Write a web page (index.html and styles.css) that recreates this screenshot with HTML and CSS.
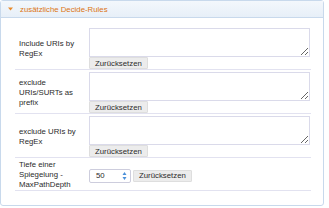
FILE: index.html
```
<!DOCTYPE html>
<html lang="de">

<head>
  <meta charset="UTF-8" />
  <title>Decide-Rules</title>
  <link rel="stylesheet" href="styles.css">
</head>

<body>
  <div class="panel">
    <div class="panel-header">
      <svg class="caret" width="5" height="4" viewBox="0 0 5 4"><path d="M0 0.5 H5 L2.5 3.5 Z" fill="#e8892a"/></svg>
      <span>zusätzliche Decide-Rules</span>
    </div>

    <div class="panel-body">
      <div class="row">
        <div class="label">Include URIs by RegEx</div>
        <div class="field">
          <textarea></textarea>
          <button>Zurücksetzen</button>
        </div>
      </div>

      <div class="row">
        <div class="label">exclude URIs/SURTs as prefix</div>
        <div class="field">
          <textarea></textarea>
          <button>Zurücksetzen</button>
        </div>
      </div>

      <div class="row">
        <div class="label">exclude URIs by RegEx</div>
        <div class="field">
          <textarea></textarea>
          <button>Zurücksetzen</button>
        </div>
      </div>

      <div class="row">
        <div class="label">Tiefe einer Spiegelung - MaxPathDepth</div>
        <div class="field inline">
          <div class="number">
            <span>50</span>
            <svg width="5" height="10" viewBox="0 0 5 10">
              <path d="M0.5 4 L2.5 1 L4.5 4 Z" fill="#4a90d9"/>
              <path d="M0.5 6 L2.5 9 L4.5 6 Z" fill="#4a90d9"/>
            </svg>
          </div>
          <button>Zurücksetzen</button>
        </div>
      </div>
    </div>
  </div>
</body>

</html>
```

FILE: styles.css
```
body {
  margin: 0;
  padding: 0;
  background: #fff;
  font-family: 'Liberation Sans', Arial, sans-serif;
  font-size: 7.8px;
  color: #2b2b2b;
}

.panel {
  width: 324px;
  height: 206px;
  box-sizing: border-box;
  border: 1px solid #c8d9ec;
  border-radius: 3px;
  background: #fff;
}

.panel-header {
  display: flex;
  align-items: center;
  height: 16px;
  padding-left: 7px;
  background: linear-gradient(#f3f7fc, #e7eff8);
  border-bottom: 1px solid #c8d9ec;
  color: #dc7412;
}

.caret {
  margin-right: 7px;
}

.panel-body {
  padding: 8px 12px 0 14px;
}

.row {
  display: flex;
  align-items: center;
  padding-top: 2px;
  border-bottom: 1px solid #e2e2f0;
}

.label {
  width: 74px;
  padding-left: 4px;
  box-sizing: border-box;
  line-height: 10px;
}

.field {
  display: flex;
  flex-direction: column;
  align-items: flex-start;
}

.field.inline {
  flex-direction: row;
  align-items: center;
  padding: 7px 0 6px;
}

textarea {
  width: 221px;
  height: 29px;
  box-sizing: border-box;
  margin: 0;
  border: 1px solid #dadaea;
  background: #fff;
}

button {
  height: 12px;
  margin: 0;
  padding: 0 5px;
  font-family: inherit;
  font-size: 7.8px;
  color: #2b2b2b;
  background: #ececec;
  border: 1px solid #dedede;
  border-radius: 1px;
}

.number {
  display: flex;
  align-items: center;
  justify-content: space-between;
  width: 42px;
  height: 14px;
  box-sizing: border-box;
  padding: 0 3px 0 6px;
  margin-right: 2px;
  border: 1px solid #cdcddd;
  border-radius: 2px;
  background: #fff;
}
```
